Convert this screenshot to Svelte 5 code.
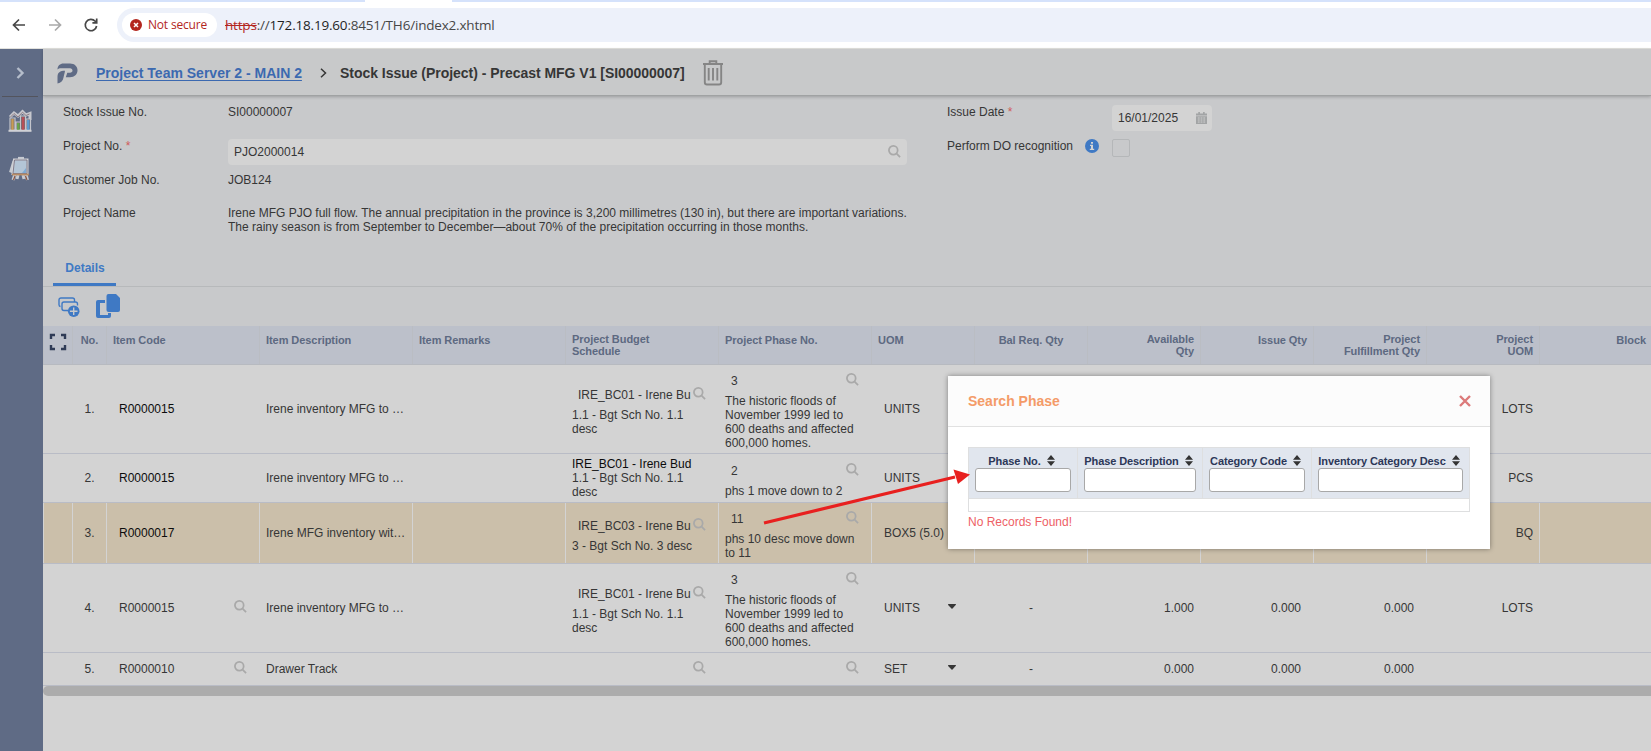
<script lang="ts">
  const columns = [
    { label: '', align: 'left' },
    { label: 'No.', align: 'center' },
    { label: 'Item Code', align: 'left' },
    { label: 'Item Description', align: 'left' },
    { label: 'Item Remarks', align: 'left' },
    { label: 'Project Budget\nSchedule', align: 'left' },
    { label: 'Project Phase No.', align: 'left' },
    { label: 'UOM', align: 'left' },
    { label: 'Bal Req. Qty', align: 'center' },
    { label: 'Available\nQty', align: 'right' },
    { label: 'Issue Qty', align: 'right' },
    { label: 'Project\nFulfillment Qty', align: 'right' },
    { label: 'Project\nUOM', align: 'right' },
    { label: 'Block', align: 'right' }
  ];

  const flood = 'The historic floods of November 1999 led to 600 deaths and affected 600,000 homes.';

  const rows = [
    { code: 'R0000015', strong: true, desc: 'Irene inventory MFG to …', budget: 'IRE_BC01 - Irene Bu', budgetDesc: '1.1 - Bgt Sch No. 1.1 desc', phase: '3', phaseDesc: flood, uom: 'UNITS', projectUom: 'LOTS' },
    { code: 'R0000015', strong: true, desc: 'Irene inventory MFG to …', budget: 'IRE_BC01 - Irene Bud', budgetFixed: true, budgetDesc: '1.1 - Bgt Sch No. 1.1 desc', phase: '2', phaseDesc: 'phs 1 move down to 2', uom: 'UNITS', projectUom: 'PCS' },
    { code: 'R0000017', strong: true, selected: true, desc: 'Irene MFG inventory wit…', budget: 'IRE_BC03 - Irene Bu', budgetDesc: '3 - Bgt Sch No. 3 desc', phase: '11', phaseDesc: 'phs 10 desc move down to 11', uom: 'BOX5 (5.0)', projectUom: 'BQ' },
    { code: 'R0000015', editable: true, desc: 'Irene inventory MFG to …', budget: 'IRE_BC01 - Irene Bu', budgetDesc: '1.1 - Bgt Sch No. 1.1 desc', phase: '3', phaseDesc: flood, uom: 'UNITS', bal: '-', available: '1.000', issue: '0.000', fulfil: '0.000', projectUom: 'LOTS' },
    { code: 'R0000010', editable: true, desc: 'Drawer Track', budget: '', budgetDesc: '', phase: '', phaseDesc: '', uom: 'SET', bal: '-', available: '0.000', issue: '0.000', fulfil: '0.000', projectUom: '' }
  ] as any[];

  const filters = ['Phase No.', 'Phase Description', 'Category Code', 'Inventory Category Desc'];
</script>

{#snippet search()}
  <svg class="search" viewBox="0 0 14 14" aria-hidden="true">
    <circle cx="5.7" cy="5.7" r="4.7" />
    <path d="M9.2 9.2 13 13" />
  </svg>
{/snippet}

<div class="window">
  <div class="tabs-strip"><span class="active-tab"></span></div>
  <div class="toolbar">
    <svg class="nav" viewBox="0 0 16 16"><path d="M14 8H2.5M8 2.5 2.5 8 8 13.5" /></svg>
    <svg class="nav nav--off" viewBox="0 0 16 16"><path d="M2 8h11.5M8 2.5 13.5 8 8 13.5" /></svg>
    <svg class="nav" viewBox="0 0 16 16"><path d="M13.6 9A5.7 5.7 0 1 1 12.2 4.2L13.5 5.5M13.7 1.5V5.8H9.4" /></svg>
    <div class="address">
      <div class="chip">
        <svg viewBox="0 0 12 12"><circle cx="6" cy="6" r="6" fill="#b3261e" /><path d="m4 4 4 4M8 4 4 8" stroke="#fff" stroke-width="1.5" /></svg>
        <span>Not secure</span>
      </div>
      <div class="url"><s>https</s><i>://</i><b>172.18.19.60</b>:8451/TH6/index2.xhtml</div>
    </div>
  </div>

  <div class="app">
    <nav class="sidebar">
      <div class="expand">
        <svg viewBox="0 0 8 12"><path d="m1.5 1 5 5-5 5" /></svg>
      </div>
      <svg class="side-icon" viewBox="0 0 24 22">
        <path d="M2 7 6 3l4 3 4.500-4.500 3.500 3.500 4-1.500V10" fill="none" stroke="#c7c8ce" stroke-width="3" />
        <path d="M2 8h5v12H2zM8 12h4.500v8H8zM12.500 6h5v14h-5zM18 9h4.500v11H18z" fill="#6c6670" stroke="#c3c5cc" stroke-width="1.200" />
        <path d="M3.300 9h2.400v11H3.300z" fill="#c99c55" />
        <path d="M9 13h2.500v7H9z" fill="#67a24c" />
        <path d="M13.800 7h2.600v13h-2.600z" fill="#b84f57" />
        <path d="M19 10h2.500v10H19z" fill="#5d9bd0" />
        <path d="M.5 20.800h23" stroke="#d0d1d5" stroke-width="2" />
        <path d="M2.500 7 6 3.500l4 3.500 4.500-4.800L18 5.500l3.500-1.500" fill="none" stroke="#7d6a72" stroke-width=".8" />
      </svg>
      <svg class="side-icon" viewBox="0 0 22 26">
        <path d="M5 5 1.500 16.500M6 18l-2 6M17 18l1.500 6M9 19l-1 4M14 19l1 4" stroke="#c7cbd2" stroke-width="3" />
        <path d="M5 3.500h13.500V18H3.500z" fill="#b3c5d6" stroke="#d3d4d8" stroke-width="2" />
        <path d="M5.500 4h12.500V17.500H4z" fill="none" stroke="#6b6577" stroke-width=".8" />
        <path d="M3 18.500h17" stroke="#b98b62" stroke-width="1.800" />
        <path d="m6 20-1.500 4M16.500 20l1.500 4" stroke="#89523e" stroke-width="1.200" />
        <path d="M9 2h6" stroke="#c7cbd2" stroke-width="2.200" />
        <path d="m13 17 4-5v5z" fill="#7fabd4" />
      </svg>
    </nav>

    <main class="page">
      <header class="page-header">
        <svg class="logo" viewBox="0 0 21 21">
          <path d="M.5 6.5C.5 2.700 3 .5 6.500 .5H13c4.500 0 7.500 2.800 7.500 6.800S17.500 14.300 13 14.300H8.800l1.500-4.500H13c1.500 0 2.500-.9 2.500-2.200S14.500 5.300 13 5.300H4C2.500 5.300 1.300 5.700.5 6.500z" />
          <path d="M.5 20.500V14C.5 9.500 3 7.800 8 7.800 7.700 10 7 12 6.500 14.500 6 18 4 19.800.5 20.500z" />
        </svg>
        <a href="#main">Project Team Server 2 - MAIN 2</a>
        <svg class="crumb" viewBox="0 0 7 10"><path d="m1 .8 4.500 4.200L1 9.200" /></svg>
        <h1>Stock Issue (Project) - Precast MFG V1 [SI00000007]</h1>
        <svg class="trash" viewBox="0 0 20 26">
          <path d="M0 4h20M6.700 3.500V1.300h6.600v2.200M1.800 4v18.200c0 1.400.8 2.300 2.200 2.300h12c1.400 0 2.200-.9 2.200-2.300V4M5.700 8v12.500M10 8v12.500M14.300 8v12.500" />
        </svg>
      </header>

      <section class="form">
        <dl class="fields">
          <dt>Stock Issue No.</dt>
          <dd>SI00000007</dd>
          <dt>Project No. <em>*</em></dt>
          <dd><div class="input input--wide"><span>PJO2000014</span>{@render search()}</div></dd>
          <dt>Customer Job No.</dt>
          <dd>JOB124</dd>
          <dt>Project Name</dt>
          <dd>Irene MFG PJO full flow. The annual precipitation in the province is 3,200 millimetres (130 in), but there are important variations.<br />The rainy season is from September to December—about 70% of the precipitation occurring in those months.</dd>
        </dl>
        <dl class="fields fields--right">
          <dt>Issue Date <em>*</em></dt>
          <dd>
            <div class="input input--date">
              <span>16/01/2025</span>
              <svg viewBox="0 0 12 13"><path d="M2.500 0h1.800v1.500h3.400V0h1.800v1.500H12v2.200H0V1.500h2.500zM0 4.500h12V13H0z" /><path class="holes" d="M2 6.500h2M5 6.500h2M8 6.500h2M2 8.700h2M5 8.700h2M8 8.700h2M2 10.900h2M5 10.900h2M8 10.900h2" /></svg>
            </div>
          </dd>
          <dt class="with-info">
            Perform DO recognition
            <svg viewBox="0 0 14 14"><circle cx="7" cy="7" r="7" fill="#3f79c4" /><path d="M6 3h2v1.800H6zM5 5.800h3v4h1.200V11H4.800V9.800H6V7H5z" fill="#d3d3d3" /></svg>
          </dt>
          <dd><span class="checkbox"></span></dd>
        </dl>
      </section>

      <div class="tabs"><span class="tab">Details</span></div>

      <div class="actions">
        <svg class="add" viewBox="0 0 22 21">
          <path d="M2.500 9.500C1.500 9.300 1 8.700 1 7.700V3c0-1.200.8-2 2-2h11.500c1.200 0 2 .8 2 2v1.500M6 13.500c-1.200 0-2-.8-2-2V7c0-1.200.8-2 2-2h11.500c1.200 0 2 .8 2 2v1.500M6 13.500h4" fill="none" stroke="#3f79c4" stroke-width="1.4" />
          <circle cx="15.700" cy="14.200" r="5.800" fill="#3f79c4" />
          <path d="M15.700 10.400v7.600M11.900 14.200h7.600" stroke="#c8c9cb" stroke-width="1.4" />
        </svg>
        <svg class="copy" viewBox="0 0 24 24">
          <path d="M12.500 0H20l4 4v12a2 2 0 0 1-2 2h-9.500a2 2 0 0 1-2-2V2a2 2 0 0 1 2-2z" />
          <path d="M2 6h7v3H4v12h8v-2h3v3a2 2 0 0 1-2 2H2a2 2 0 0 1-2-2V8a2 2 0 0 1 2-2z" />
        </svg>
      </div>

      <div class="grid">
        <div class="row row--head">
          {#each columns as column, i}
            <div class="cell {column.align}" class:two={column.label.includes('\n')}>
              {#if i === 0}
                <svg class="expand-icon" viewBox="0 0 16 16"><path d="M1 5V1h4M11 1h4v4M15 11v4h-4M5 15H1v-4" /></svg>
              {:else}
                {column.label}
              {/if}
            </div>
          {/each}
        </div>
        {#each rows as row, i}
          <div class="row" class:row--selected={row.selected}>
            <div class="cell"></div>
            <div class="cell center">{i + 1}.</div>
            <div class="cell">
              <div class="lookup" class:strong={row.strong}>
                <span>{row.code}</span>
                {#if row.editable}{@render search()}{/if}
              </div>
            </div>
            <div class="cell">{row.desc}</div>
            <div class="cell"></div>
            <div class="cell">
              {#if row.budgetFixed}
                <div class="strong">{row.budget}</div>
              {:else}
                <div class="lookup"><span>{row.budget}</span>{@render search()}</div>
              {/if}
              <div class="note note--narrow">{row.budgetDesc}</div>
            </div>
            <div class="cell">
              <div class="lookup"><span>{row.phase}</span>{@render search()}</div>
              <div class="note">{row.phaseDesc}</div>
            </div>
            <div class="cell">
              <div class="unit">
                <span>{row.uom}</span>
                {#if row.editable}<svg viewBox="0 0 8 5"><path d="M0 .5C0 .2.2 0 .5 0h7c.4 0 .6.4.4.7L4.500 4.500a.7.7 0 0 1-1 0L.1.9z" /></svg>{/if}
              </div>
            </div>
            <div class="cell center">{row.bal ?? ''}</div>
            <div class="cell right">{row.available ?? ''}</div>
            <div class="cell right inset">{row.issue ?? ''}</div>
            <div class="cell right inset">{row.fulfil ?? ''}</div>
            <div class="cell right">{row.projectUom}</div>
            <div class="cell"></div>
          </div>
        {/each}
      </div>
      <div class="scrollbar"></div>
    </main>
  </div>

  <div class="dialog" role="dialog" aria-label="Search Phase">
    <div class="dialog-header">
      <h2>Search Phase</h2>
      <svg viewBox="0 0 12 12"><path d="m1 1 10 10M11 1 1 11" /></svg>
    </div>
    <div class="dialog-body">
      <div class="filters">
        {#each filters as filter}
          <div class="filter">
            <div class="filter-label">
              {filter}
              <svg viewBox="0 0 8 11"><path d="M4 0 8 4.800H0zM0 6.200h8L4 11z" /></svg>
            </div>
            <input aria-label={filter} />
          </div>
        {/each}
      </div>
      <div class="empty-row"></div>
      <div class="message">No Records Found!</div>
    </div>
  </div>

  <svg class="pointer" viewBox="0 0 208 58" aria-hidden="true">
    <path d="M1 51 192 5" stroke="#e8201f" stroke-width="3.2" />
    <path d="m207 2.500-16.500-5 4.500 14.500z" fill="#e8201f" />
  </svg>
</div>

<style>
  :global(body) {
    overflow: hidden;
  }

  .window {
    position: relative;
    width: 1651px;
    height: 751px;
    overflow: hidden;
    background: #fff;
    color: #363636;
    font-family: 'Liberation Sans', Arial, sans-serif;
    font-size: 12px;
    line-height: 14px;
  }

  svg {
    display: block;
    flex: none;
    overflow: visible;
    fill: none;
  }

  .tabs-strip {
    height: 2px;
    padding-left: 365px;
    background: #d5e2fb;
  }

  .active-tab {
    display: block;
    width: 87px;
    height: 2px;
    background: #fff;
  }

  .toolbar {
    display: flex;
    align-items: center;
    box-sizing: border-box;
    height: 47px;
    padding: 0 0 1px 11px;
    border-bottom: 1px solid #e2e2de;
  }

  .nav {
    width: 16px;
    height: 16px;
    margin-right: 20px;
    stroke: #474747;
    stroke-width: 1.7;
  }

  .nav--off {
    stroke: #a9a9a9;
  }

  .address {
    display: flex;
    flex: 1;
    align-items: center;
    height: 34px;
    margin-left: -2px;
    padding-left: 5px;
    border-radius: 17px 0 0 17px;
    background: #edf1fa;
    font-family: 'Open Sans', 'Noto Sans', sans-serif;
    font-size: 13.5px;
    letter-spacing: -0.19px;
  }

  .chip {
    display: flex;
    align-items: center;
    gap: 6px;
    box-sizing: border-box;
    width: 95px;
    height: 24px;
    padding-left: 8px;
    border-radius: 12px;
    background: #fff;
    color: #b3261e;
    font-size: 12px;
    white-space: nowrap;
  }

  .chip svg {
    width: 12px;
    height: 12px;
  }

  .url {
    margin-left: 8px;
    padding-top: 1px;
    color: #474747;
    white-space: nowrap;
  }

  .url s {
    color: #b3261e;
  }

  .url i {
    font-style: normal;
  }

  .url b {
    color: #1f1f1f;
    font-weight: 400;
  }

  .app {
    display: flex;
    height: 702px;
  }

  .sidebar {
    display: flex;
    flex-direction: column;
    align-items: center;
    box-sizing: border-box;
    width: 43px;
    padding-right: 3px;
    background: #5f6b85;
  }

  .expand {
    display: flex;
    align-items: center;
    justify-content: center;
    width: 36px;
    height: 47px;
    margin-bottom: 13px;
    border-bottom: 1px solid #53545d;
  }

  .expand svg {
    width: 8px;
    height: 12px;
    stroke: #b5bdcb;
    stroke-width: 2.4;
  }

  .side-icon {
    width: 24px;
    height: 22px;
    margin-bottom: 24px;
  }

  .side-icon + .side-icon {
    width: 22px;
    height: 26px;
  }

  .page {
    flex: 1;
    min-width: 0;
    background: #d3d3d3;
  }

  .page-header {
    position: relative;
    display: flex;
    align-items: center;
    box-sizing: border-box;
    height: 47px;
    padding: 2px 0 0 14px;
    border-bottom: 1px solid #a0a2a3;
    background: #c8c9ca;
    box-shadow: 0 1px 3px rgba(0, 0, 0, 0.22);
    font-size: 14px;
    font-weight: 700;
    white-space: nowrap;
  }

  .logo {
    width: 21px;
    height: 21px;
    margin-right: 18px;
    fill: #5f6b85;
  }

  .page-header a {
    width: 206px;
    color: #3c69b0;
    text-underline-offset: 2px;
  }

  .crumb {
    width: 7px;
    height: 10px;
    margin: 0 13px 0 18px;
    stroke: #363636;
    stroke-width: 1.5;
  }

  h1,
  h2 {
    margin: 0;
    font-size: 14px;
    line-height: 18px;
  }

  h1 {
    width: 345px;
    margin-right: 18px;
    letter-spacing: -0.03px;
  }

  .trash {
    width: 20px;
    height: 26px;
    stroke: #858585;
    stroke-width: 1.9;
  }

  .form {
    display: flex;
    box-sizing: border-box;
    height: 161px;
    padding: 9px 0 0 20px;
    background: #c8c9cb;
  }

  .fields {
    display: grid;
    grid-template-columns: 165px 679px;
    grid-template-rows: 34px 34px 33px 40px;
    width: 884px;
    margin: 0;
  }

  .fields--right {
    grid-template-columns: 165px 100px;
    width: auto;
  }

  dt,
  dd {
    margin: 0;
    white-space: nowrap;
  }

  em {
    color: #cf5b5b;
    font-style: normal;
  }

  .input {
    display: flex;
    align-items: center;
    justify-content: space-between;
    box-sizing: border-box;
    height: 26px;
    padding: 0 6px;
    border-radius: 4px;
    background: #d3d3d3;
  }

  .input--date svg {
    width: 11px;
    height: 12px;
    margin-right: -1px;
    fill: #a2a4a5;
  }

  .holes {
    stroke: #d3d3d3;
    stroke-width: 1;
  }

  .with-info {
    display: flex;
    justify-content: space-between;
    padding-right: 13px;
  }

  .with-info svg {
    width: 14px;
    height: 14px;
  }

  .checkbox {
    display: block;
    box-sizing: border-box;
    width: 18px;
    height: 18px;
    border: 1px solid #b5b7b9;
    border-radius: 2px;
  }

  .search {
    width: 13px;
    height: 13px;
    stroke: #a9a9a9;
    stroke-width: 1.9;
  }

  .input .search {
    margin-bottom: 1px;
  }

  .tabs {
    box-sizing: border-box;
    height: 30px;
    padding-left: 10px;
    border-bottom: 1px solid #b7b9bb;
    background: #c8c9cb;
  }

  .tab {
    display: block;
    box-sizing: border-box;
    width: 63px;
    height: 29px;
    padding: 4px 0 0 1px;
    border-bottom: 3px solid #3f79c4;
    color: #3f79c4;
    font-weight: 700;
    text-align: center;
  }

  .actions {
    display: flex;
    align-items: flex-start;
    gap: 16px;
    box-sizing: border-box;
    height: 39px;
    padding: 7px 0 0 15px;
    background: #c8c9cb;
  }

  .add {
    width: 22px;
    height: 21px;
    margin-top: 3px;
  }

  .copy {
    width: 24px;
    height: 24px;
    fill: #3f79c4;
  }

  .row {
    display: grid;
    grid-template-columns: 29px 34px repeat(5, 153px) 103px repeat(6, 113px);
    border-bottom: 1px solid #b9bcc6;
  }

  .cell {
    display: flex;
    flex-direction: column;
    justify-content: center;
    box-sizing: border-box;
    min-width: 0;
    padding: 3px 6px;
    border-left: 1px solid transparent;
    white-space: nowrap;
  }

  .row--head {
    box-sizing: border-box;
    height: 39px;
    border-bottom-color: #b7bac0;
    background: #bcc0ca;
    color: #5d6981;
    font-size: 11px;
    font-weight: 700;
    line-height: 12px;
    letter-spacing: -0.06px;
  }

  .row--head .cell {
    justify-content: flex-start;
    padding-top: 8px;
    border-left-color: #babdc3;
    white-space: pre-line;
  }

  .row--head .two {
    padding-top: 7px;
  }

  .row--selected {
    background: #cbbfaa;
  }

  .row--selected .cell {
    border-left-color: #d3d3d3;
  }

  .center {
    text-align: center;
  }

  .right {
    text-align: right;
  }

  .inset {
    padding-right: 12px;
  }

  .expand-icon {
    width: 16px;
    height: 16px;
    stroke: #2f3b56;
    stroke-width: 2.4;
  }

  .lookup {
    display: flex;
    align-items: center;
    justify-content: space-between;
    height: 26px;
    padding: 0 6px;
  }

  .lookup .search {
    margin-bottom: 3px;
  }

  .strong {
    color: #0c0c0c;
  }

  .note {
    width: 132px;
    white-space: normal;
  }

  .note--narrow {
    width: 122px;
  }

  .unit {
    display: flex;
    align-items: center;
    justify-content: space-between;
    padding: 0 12px 0 6px;
  }

  .unit svg {
    width: 8px;
    height: 5px;
    margin-bottom: 3px;
    fill: #363636;
  }

  .scrollbar {
    height: 10px;
    border-radius: 5px 0 0 5px;
    background: #acacac;
  }

  .dialog {
    position: absolute;
    top: 376px;
    left: 948px;
    width: 542px;
    height: 173px;
    background: #fff;
    box-shadow: 0 0 5px rgba(0, 0, 0, 0.4);
  }

  .dialog-header {
    display: flex;
    align-items: center;
    justify-content: space-between;
    box-sizing: border-box;
    height: 51px;
    padding: 0 19px 0 20px;
    border-bottom: 1px solid #e1e1e1;
    background: #fcfcfc;
  }

  h2 {
    color: #f49b68;
  }

  .dialog-header svg {
    width: 12px;
    height: 12px;
    stroke: #dc7a7a;
    stroke-width: 2.4;
  }

  .dialog-body {
    padding: 20px 20px 0;
  }

  .filters {
    display: grid;
    grid-template-columns: 109px 125px 109px 158px;
    box-sizing: border-box;
    width: 502px;
    height: 52px;
    border: 1px solid #dedfe0;
    border-left: 0;
    background: #e1e6ee;
  }

  .filter {
    display: flex;
    flex-direction: column;
    min-width: 0;
    padding: 6px 6px 0;
    border-left: 1px solid #dedfe0;
  }

  .filter-label {
    display: flex;
    align-items: center;
    justify-content: center;
    gap: 6px;
    height: 13px;
    margin-bottom: 1px;
    padding-right: 3px;
    color: #2c3757;
    font-size: 11px;
    font-weight: 700;
    letter-spacing: -0.1px;
    white-space: nowrap;
  }

  .filter-label svg {
    width: 8px;
    height: 11px;
    margin-bottom: 1px;
    fill: #333;
  }

  .filter input {
    box-sizing: border-box;
    width: 100%;
    height: 24px;
    border: 1px solid #a8a8a8;
    border-radius: 3px;
    background: #fff;
  }

  .empty-row {
    box-sizing: border-box;
    width: 502px;
    height: 13px;
    border: 1px solid #dedfe0;
    border-top: 0;
  }

  .message {
    margin-top: 3px;
    color: #ee5f66;
  }

  .pointer {
    position: absolute;
    top: 472px;
    left: 763px;
    width: 208px;
    height: 58px;
  }
</style>
